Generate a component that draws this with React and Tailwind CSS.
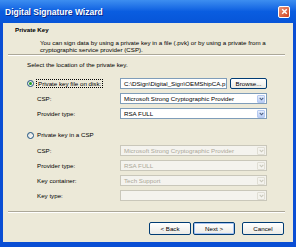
import React from 'react';

const font = { fontFamily: '"Liberation Sans", Arial, sans-serif' };

function Radio({ checked }) {
  return (
    <span className="flex h-[7px] w-[7px] shrink-0 items-center justify-center rounded-full border border-[#1c5180] bg-gradient-to-br from-[#dcdcd6] to-white">
      {checked && <span className="h-[3px] w-[3px] rounded-full bg-[#21a121]" />}
    </span>
  );
}

function Select({ value, disabled }) {
  return (
    <div
      className={`flex h-[11px] items-center border ${
        disabled ? 'border-[#c9c7ba] bg-[#f4f3ee] text-[#aca899]' : 'border-[#7f9db9] bg-white text-black'
      }`}
    >
      <span className="flex-1 truncate pl-[3px]">{value}</span>
      <span
        className={`mr-[1px] flex h-[8px] w-[8px] items-center justify-center rounded-[1px] border ${
          disabled ? 'border-[#e0ded4] bg-[#f4f3ee]' : 'border-[#b5c9f1] bg-gradient-to-b from-[#e6eefc] to-[#b9cdf5]'
        }`}
      >
        <svg width="5" height="4" viewBox="0 0 5 4">
          <path d="M0.7 0.8 L2.5 2.8 L4.3 0.8" fill="none" stroke={disabled ? '#c9c7ba' : '#4d6185'} strokeWidth="1.1" />
        </svg>
      </span>
    </div>
  );
}

function Button({ children, focus }) {
  return (
    <div
      className={`flex h-[13px] w-[42px] items-center justify-center rounded-[2px] border border-[#003c74] bg-gradient-to-b from-white to-[#ecebe6] ${
        focus ? 'shadow-[inset_0_0_0_1px_#a8c4f2]' : ''
      }`}
    >
      {children}
    </div>
  );
}

function Row({ label, children }) {
  return (
    <div className="flex items-center">
      <span className="w-[83px]">{label}</span>
      <div className="flex-1">{children}</div>
    </div>
  );
}

export default function App() {
  return (
    <div className="flex h-[247px] w-[296px] flex-col bg-[#0a4ed4] text-[6.2px] leading-[8px] text-black" style={font}>
      {/* title bar */}
      <div className="flex h-[23px] shrink-0 items-center justify-between bg-gradient-to-b from-[#3d8ef0] via-[#0a5de0] to-[#0755d8] pl-[5px] pr-[6px]">
        <span className="text-[8.5px] font-bold text-white [text-shadow:1px_1px_0_#0a2a8c]">Digital Signature Wizard</span>
        <span className="flex h-[12px] w-[12px] items-center justify-center rounded-[2px] border border-white bg-gradient-to-br from-[#e99275] to-[#d2401a]">
          <svg width="7" height="7" viewBox="0 0 7 7">
            <path d="M1.2 1.2 L5.8 5.8 M5.8 1.2 L1.2 5.8" stroke="white" strokeWidth="1.5" />
          </svg>
        </span>
      </div>

      {/* body */}
      <div className="mx-[3px] mb-[5px] flex flex-1 flex-col bg-[#ece9d8]">
        <div className="pl-[12px] pt-[3px]">
          <div className="font-bold">Private Key</div>
          <div className="mt-[5px] pl-[25px] leading-[7px] whitespace-nowrap">
            You can sign data by using a private key in a file (.pvk) or by using a private from a
            <br />
            cryptographic service provider (CSP).
          </div>
        </div>
        <div className="ml-[5px] mr-[8px] mt-[1px] border-t border-b border-t-[#aca899] border-b-white" />

        <div className="pl-[24px] pr-[26px]">
          <div className="mt-[5px]">Select the location of the private key.</div>

          <div className="mt-[9px] flex h-[11px] items-center">
            <div className="flex w-[93px] items-center gap-[2px]">
              <Radio checked />
              <span className="border border-dotted border-black px-[1px] leading-[7px]">Private key file on disk:</span>
            </div>
            <div className="flex h-[11px] flex-1 items-center overflow-hidden whitespace-nowrap border border-[#7f9db9] bg-white pl-[3px]">
              C:\DSign\Digital_Sign\OEMShipCA.p
            </div>
            <div className="ml-[3px] flex h-[11px] w-[37px] items-center justify-center rounded-[2px] border border-[#003c74] bg-gradient-to-b from-white to-[#ecebe6]">
              Browse...
            </div>
          </div>

          <div className="mt-[4px] flex flex-col gap-[4px] pl-[10px]">
            <Row label="CSP:"><Select value="Microsoft Strong Cryptographic Provider" /></Row>
            <Row label="Provider type:"><Select value="RSA FULL" /></Row>
          </div>

          <div className="mt-[12px] flex h-[8px] items-center gap-[3px]">
            <Radio />
            <span>Private key in a CSP</span>
          </div>

          <div className="mt-[6px] flex flex-col gap-[4px] pl-[10px]">
            <Row label="CSP:"><Select value="Microsoft Strong Cryptographic Provider" disabled /></Row>
            <Row label="Provider type:"><Select value="RSA FULL" disabled /></Row>
            <Row label="Key container:"><Select value="Tech Support" disabled /></Row>
            <Row label="Key type:"><Select value="" disabled /></Row>
          </div>
        </div>

        <div className="ml-[5px] mr-[8px] mt-[10px] border-t border-b border-t-[#aca899] border-b-white" />

        <div className="mt-[9px] flex justify-end pr-[9px]">
          <Button>&lt; Back</Button>
          <div className="ml-[2px]"><Button focus>Next &gt;</Button></div>
          <div className="ml-[7px]"><Button>Cancel</Button></div>
        </div>
      </div>
    </div>
  );
}
